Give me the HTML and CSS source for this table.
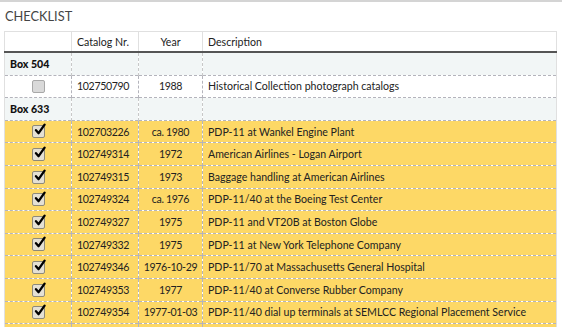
FILE: index.html
```html
<!DOCTYPE html>
<html>
<head>
<meta charset="utf-8">
<link rel="stylesheet" href="styles.css">
</head>
<body>
<div class="panel">
  <h2 class="title">CHECKLIST</h2>
  <table class="checklist">
    <colgroup>
      <col class="c-check"><col class="c-cat"><col class="c-year"><col class="c-desc">
    </colgroup>
    <thead>
      <tr><th></th><th class="left">Catalog Nr.</th><th>Year</th><th class="left">Description</th></tr>
    </thead>
    <tbody>
      <tr class="group"><td class="box">Box 504</td><td></td><td></td><td></td></tr>
      <tr><td class="chk"><span class="cb"></span></td><td class="num">102750790</td><td class="yr num">1988</td><td>Historical Collection photograph catalogs</td></tr>
      <tr class="group"><td class="box">Box 633</td><td></td><td></td><td></td></tr>
      <tr class="sel"><td class="chk"><span class="cb on"><svg viewBox="0 0 14 14" width="14" height="14"><path d="M3 7.2 L5.6 10.2 L11.6 1.6" fill="none" stroke="#000" stroke-width="2.3" stroke-linecap="round" stroke-linejoin="round"/></svg></span></td><td class="num">102703226</td><td class="yr num">ca. 1980</td><td>PDP-11 at Wankel Engine Plant</td></tr>
      <tr class="sel"><td class="chk"><span class="cb on"><svg viewBox="0 0 14 14" width="14" height="14"><path d="M3 7.2 L5.6 10.2 L11.6 1.6" fill="none" stroke="#000" stroke-width="2.3" stroke-linecap="round" stroke-linejoin="round"/></svg></span></td><td class="num">102749314</td><td class="yr num">1972</td><td>American Airlines - Logan Airport</td></tr>
      <tr class="sel"><td class="chk"><span class="cb on"><svg viewBox="0 0 14 14" width="14" height="14"><path d="M3 7.2 L5.6 10.2 L11.6 1.6" fill="none" stroke="#000" stroke-width="2.3" stroke-linecap="round" stroke-linejoin="round"/></svg></span></td><td class="num">102749315</td><td class="yr num">1973</td><td>Baggage handling at American Airlines</td></tr>
      <tr class="sel"><td class="chk"><span class="cb on"><svg viewBox="0 0 14 14" width="14" height="14"><path d="M3 7.2 L5.6 10.2 L11.6 1.6" fill="none" stroke="#000" stroke-width="2.3" stroke-linecap="round" stroke-linejoin="round"/></svg></span></td><td class="num">102749324</td><td class="yr num">ca. 1976</td><td>PDP-11/40 at the Boeing Test Center</td></tr>
      <tr class="sel"><td class="chk"><span class="cb on"><svg viewBox="0 0 14 14" width="14" height="14"><path d="M3 7.2 L5.6 10.2 L11.6 1.6" fill="none" stroke="#000" stroke-width="2.3" stroke-linecap="round" stroke-linejoin="round"/></svg></span></td><td class="num">102749327</td><td class="yr num">1975</td><td>PDP-11 and VT20B at Boston Globe</td></tr>
      <tr class="sel"><td class="chk"><span class="cb on"><svg viewBox="0 0 14 14" width="14" height="14"><path d="M3 7.2 L5.6 10.2 L11.6 1.6" fill="none" stroke="#000" stroke-width="2.3" stroke-linecap="round" stroke-linejoin="round"/></svg></span></td><td class="num">102749332</td><td class="yr num">1975</td><td>PDP-11 at New York Telephone Company</td></tr>
      <tr class="sel"><td class="chk"><span class="cb on"><svg viewBox="0 0 14 14" width="14" height="14"><path d="M3 7.2 L5.6 10.2 L11.6 1.6" fill="none" stroke="#000" stroke-width="2.3" stroke-linecap="round" stroke-linejoin="round"/></svg></span></td><td class="num">102749346</td><td class="yr num">1976-10-29</td><td>PDP-11/70 at Massachusetts General Hospital</td></tr>
      <tr class="sel"><td class="chk"><span class="cb on"><svg viewBox="0 0 14 14" width="14" height="14"><path d="M3 7.2 L5.6 10.2 L11.6 1.6" fill="none" stroke="#000" stroke-width="2.3" stroke-linecap="round" stroke-linejoin="round"/></svg></span></td><td class="num">102749353</td><td class="yr num">1977</td><td>PDP-11/40 at Converse Rubber Company</td></tr>
      <tr class="sel"><td class="chk"><span class="cb on"><svg viewBox="0 0 14 14" width="14" height="14"><path d="M3 7.2 L5.6 10.2 L11.6 1.6" fill="none" stroke="#000" stroke-width="2.3" stroke-linecap="round" stroke-linejoin="round"/></svg></span></td><td class="num">102749354</td><td class="yr num">1977-01-03</td><td>PDP-11/40 dial up terminals at SEMLCC Regional Placement Service</td></tr>
      <tr class="sel"><td class="chk"></td><td></td><td></td><td></td></tr>
    </tbody>
  </table>
</div>
</body>
</html>
```

FILE: styles.css
```css
html, body {
  margin: 0;
  padding: 0;
  background: #fff;
  overflow: hidden;
}
body {
  font-family: Lato, "Open Sans", sans-serif;
  color: #222;
}
.panel {
  border-top: 2px solid #d4d4d4;
  padding: 0 5px 0 4px;
}
.title {
  margin: 0;
  height: 29px;
  line-height: 29px;
  padding-left: 1px;
  font-size: 12.8px;
  font-weight: 400;
  color: #444;
}
.checklist {
  width: 553px;
  border-collapse: collapse;
  table-layout: fixed;
  font-size: 10.6px;
  border: 1px solid #e0e0e0;
}
.c-check { width: 67px; }
.c-cat { width: 67px; }
.c-year { width: 64px; }
.checklist th {
  padding: 3px 5px 1px;
  line-height: 15px;
  font-weight: 400;
  text-align: center;
  border-left: 1px solid #e0e0e0;
  border-bottom: 2px solid #555;
  color: #222;
}
.checklist th:first-child { border-left: none; }
.checklist th.left { text-align: left; }
.checklist td {
  height: 21.6px;
  padding: 0 5px;
  border-left: 1px dashed #b4b4bc;
  border-top: 1px dashed #b4b4bc;
  white-space: nowrap;
  overflow: hidden;
}
.checklist td:first-child { border-left: none; }
.checklist tbody tr:first-child td { border-top: none; }
.checklist tr.group td {
  background: #f2f6f6;
  border-left-color: #c8c8c8;
}
.checklist tr.group td:first-child { border-left: none; }
.checklist td.box {
  font-weight: 900;
  padding-left: 5px;
  color: #111;
}
.checklist tr.sel td {
  background: #fdd866;
}
.checklist td.num { letter-spacing: -0.35px; }
.checklist td.yr { text-align: center; padding: 0; }
.checklist td.chk { text-align: center; padding: 0; }
.cb {
  display: inline-block;
  width: 11px;
  height: 11px;
  border: 1px solid #a8a8a8;
  border-radius: 2px;
  background: #d9d9d9;
  vertical-align: middle;
  position: relative;
}
.cb.on {
  background: #e4e0d4;
  border-color: #8e8a7a;
}
.cb svg {
  position: absolute;
  left: 0;
  top: -3px;
}
```
